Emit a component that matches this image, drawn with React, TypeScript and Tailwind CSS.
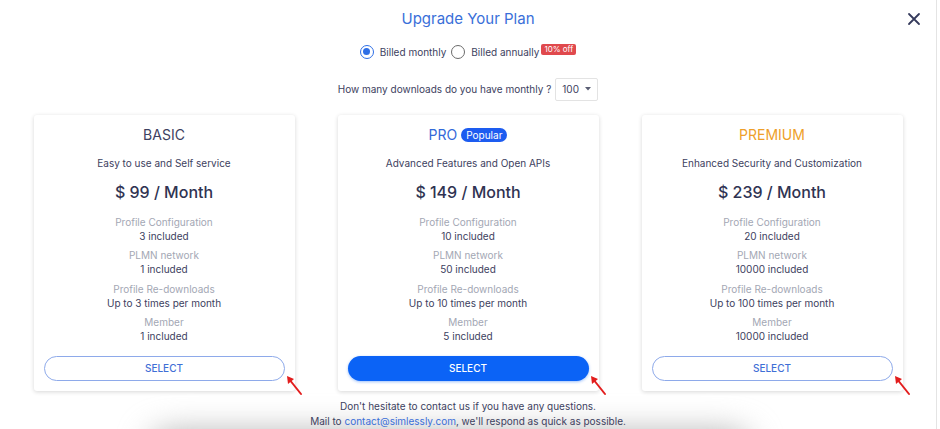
import React from "react";

type Plan = {
  name: string;
  nameClass: string;
  popular?: boolean;
  tagline: string;
  price: string;
  features: { label: string; value: string }[];
  primary?: boolean;
};

const PLANS: Plan[] = [
  {
    name: "BASIC",
    nameClass: "text-[#3d4160]",
    tagline: "Easy to use and Self service",
    price: "$ 99 / Month",
    features: [
      { label: "Profile Configuration", value: "3 included" },
      { label: "PLMN network", value: "1 included" },
      { label: "Profile Re-downloads", value: "Up to 3 times per month" },
      { label: "Member", value: "1 included" },
    ],
  },
  {
    name: "PRO",
    nameClass: "text-[#3469d9]",
    popular: true,
    tagline: "Advanced Features and Open APIs",
    price: "$ 149 / Month",
    features: [
      { label: "Profile Configuration", value: "10 included" },
      { label: "PLMN network", value: "50 included" },
      { label: "Profile Re-downloads", value: "Up to 10 times per month" },
      { label: "Member", value: "5 included" },
    ],
    primary: true,
  },
  {
    name: "PREMIUM",
    nameClass: "text-[#ee9f2a]",
    tagline: "Enhanced Security and Customization",
    price: "$ 239 / Month",
    features: [
      { label: "Profile Configuration", value: "20 included" },
      { label: "PLMN network", value: "10000 included" },
      { label: "Profile Re-downloads", value: "Up to 100 times per month" },
      { label: "Member", value: "10000 included" },
    ],
  },
];

// red annotation arrow pointing at the button corner
const Arrow = () => (
  <svg
    className="absolute left-[251px] top-[259px]"
    width="18"
    height="22"
    viewBox="0 0 18 22"
  >
    <path d="M16 20 L4 5" stroke="#e21d1d" strokeWidth="2" strokeLinecap="round" />
    <path d="M2 2 L3 10 L9 5 Z" fill="#e21d1d" />
  </svg>
);

const PlanCard = ({ plan }: { plan: Plan }) => (
  <div className="relative flex w-[261px] flex-col items-center rounded-[3px] bg-white px-[10px] pb-[10px] pt-[10px] shadow-[0_1px_4px_rgba(0,0,0,0.16)]">
    <div className="flex h-[20px] items-center gap-[4px]">
      <span className={`text-[14px] leading-[20px] ${plan.nameClass}`}>{plan.name}</span>
      {plan.popular && (
        <span className="rounded-full bg-[#1d5cf0] px-[5px] text-[10px] leading-[14px] text-white">
          Popular
        </span>
      )}
    </div>
    <p className="mt-[11px] text-[10px] leading-[14px] text-[#3d4160]">{plan.tagline}</p>
    <p className="mt-[11px] text-[16px] font-medium leading-[22px] text-[#2f3352]">{plan.price}</p>
    <div className="mt-[12px] flex flex-col items-center gap-[5.5px]">
      {plan.features.map((f) => (
        <div key={f.label} className="flex flex-col items-center">
          <span className="text-[10px] leading-[14px] text-[#a3a7b4]">{f.label}</span>
          <span className="text-[10px] leading-[14px] text-[#3d4160]">{f.value}</span>
        </div>
      ))}
    </div>
    <button
      className={
        plan.primary
          ? "mt-[13px] h-[25px] w-full rounded-full bg-[#0b63f6] text-[10px] font-medium text-white shadow-[0_1px_3px_rgba(11,99,246,0.4)]"
          : "mt-[13px] h-[25px] w-full rounded-full border border-[#8eaaea] bg-white text-[10px] font-medium text-[#3f6fd6]"
      }
    >
      SELECT
    </button>
    <Arrow />
  </div>
);

export default function App() {
  return (
    <div className="relative h-[429px] w-[940px] overflow-hidden bg-white font-['Inter',_'Liberation_Sans',_sans-serif]">
      {/* soft shadow from the element below */}
      <div className="absolute left-[150px] top-[432px] h-[40px] w-[600px] rounded-full bg-[#b0b0b0] blur-[16px]" />
      <div className="relative flex h-full w-[937px] flex-col items-center border-r border-[#e4e4e4] pt-[2px]">
        <div className="relative flex h-[42px] w-full items-center justify-center">
          <h1 className="text-[15px] leading-[20px] text-[#3a6fd9]">Upgrade Your Plan</h1>
          <button className="absolute right-[15px] top-[10px] text-[#353a5c]">
            <svg width="14" height="14" viewBox="0 0 14 14">
              <path d="M2 2 L12 12 M12 2 L2 12" stroke="currentColor" strokeWidth="1.8" strokeLinecap="round" />
            </svg>
          </button>
        </div>

        <div className="mt-[7px] flex items-center text-[10px] leading-[14px] text-[#3d4160]">
          <span className="flex h-[14px] w-[14px] items-center justify-center rounded-full border-[1.5px] border-[#2e6fe6]">
            <span className="h-[7px] w-[7px] rounded-full bg-[#2e6fe6]" />
          </span>
          <span className="ml-[6px]">Billed monthly</span>
          <span className="ml-[5px] h-[14px] w-[14px] rounded-full border-[1.5px] border-[#6b6b6b]" />
          <span className="ml-[6px]">Billed annually</span>
          <span className="mb-[5px] ml-[2px] rounded-[2px] bg-[#e0494d] px-[3px] text-[8px] leading-[11px] text-white">
            10% off
          </span>
        </div>

        <div className="mt-[18px] flex items-center text-[10px] text-[#3d4160]">
          <span>How many downloads do you have monthly ?</span>
          <div className="ml-[4px] flex h-[23px] w-[43px] items-center justify-between rounded-[2px] border border-[#e3e3e3] px-[6px]">
            <span>100</span>
            <svg width="6" height="4" viewBox="0 0 6 4">
              <path d="M0 0 L6 0 L3 3.5 Z" fill="#5a5e73" />
            </svg>
          </div>
        </div>

        <div className="mt-[14px] flex gap-[43px]">
          {PLANS.map((p) => (
            <PlanCard key={p.name} plan={p} />
          ))}
        </div>

        <div className="mt-[8px] flex flex-col items-center text-[10px] leading-[15px] text-[#3d4160]">
          <p>Don't hesitate to contact us if you have any questions.</p>
          <p>
            Mail to <span className="text-[#3a6fd9]">contact@simlessly.com</span>, we'll respond as quick as possible.
          </p>
        </div>
      </div>
    </div>
  );
}
